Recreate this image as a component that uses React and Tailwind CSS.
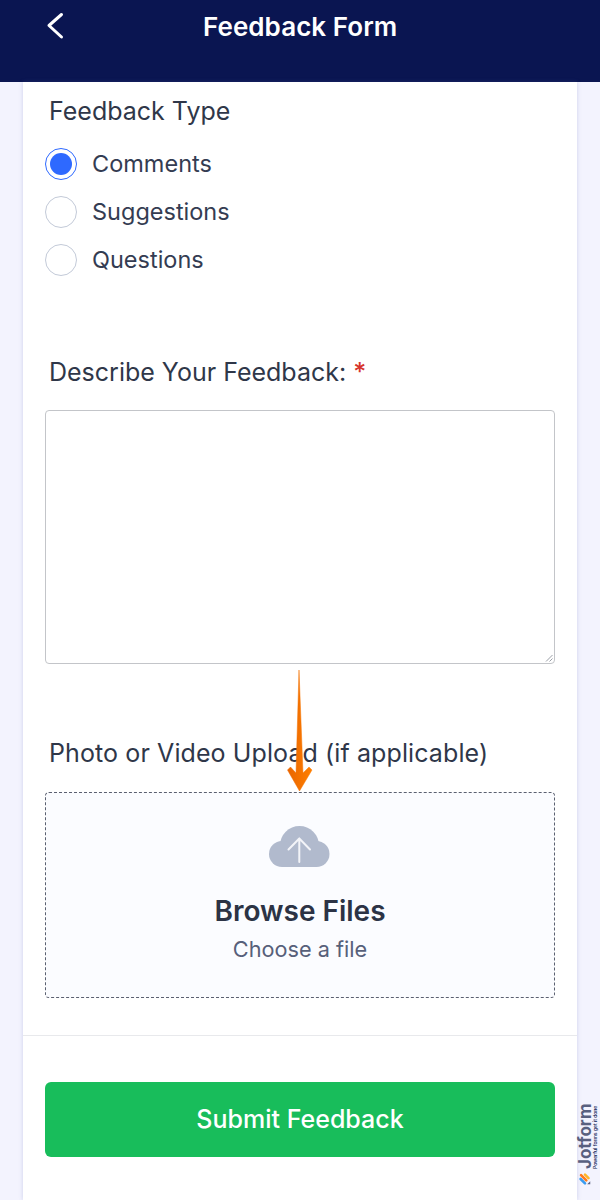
import React from 'react';

function CloudIcon() {
  return (
    <svg width="62" height="42" viewBox="0 0 62 42" className="block">
      <g fill="#b1bacd">
        <circle cx="30.500" cy="19.500" r="19.500" />
        <circle cx="13" cy="28" r="13" />
        <circle cx="47.500" cy="28" r="13" />
        <rect x="13" y="20" width="34.500" height="21" />
      </g>
      <path d="M30.300 36V12.500M19.500 23.500L30.300 12.500L41 23.500" fill="none" stroke="#f3f4f8" strokeWidth="2" strokeLinecap="round" strokeLinejoin="round" />
    </svg>
  );
}

function ArrowOverlay() {
  return (
    <svg width="26" height="122" viewBox="0 0 26 122" className="absolute left-[287px] top-[670px]">
      <defs>
        <linearGradient id="arrowFill" x1="0" y1="0" x2="1" y2="0">
          <stop offset="0" stopColor="#e96500" />
          <stop offset="1" stopColor="#ff7f00" />
        </linearGradient>
      </defs>
      <path d="M12 0L16 103L22 97L25 100L12.500 121L0.500 100L3.500 97L9 103z" fill="url(#arrowFill)" stroke="url(#arrowFill)" strokeWidth="0.500" strokeLinejoin="round" />
    </svg>
  );
}

function JotformBadge() {
  return (
    <div className="absolute left-[538px] top-[1125px] flex h-[22px] w-[100px] origin-center -rotate-90 items-center gap-[3px]">
      <svg width="14" height="16" viewBox="0 0 16 14" className="mb-[6px] shrink-0 rotate-90">
        <path d="M3 7L8 12" stroke="#3a9bf0" strokeWidth="3" strokeLinecap="round" />
        <path d="M3.500 2.500L9.500 8.500" stroke="#ff7a1a" strokeWidth="3" strokeLinecap="round" />
        <path d="M8 2L12 6" stroke="#ffb629" strokeWidth="3" strokeLinecap="round" />
        <path d="M14 9.500V13H10.500z" fill="#59607f" />
      </svg>
      <div className="flex flex-col">
        <div className="text-[17px] leading-[14px] font-bold text-[#59607f]">Jotform</div>
        <div className="text-[5px] leading-[6px] font-medium whitespace-nowrap text-[#0a1551]">Powerful forms get it done</div>
      </div>
    </div>
  );
}

function RadioOption({ label, checked }) {
  return (
    <div className="flex h-[32px] items-center gap-[15px]">
      <span className={`flex h-[32px] w-[32px] items-center justify-center rounded-full border bg-white ${checked ? 'border-[#2e69ff]' : 'border-[#c3cad8]'}`}>
        {checked && <span className="h-[22px] w-[22px] rounded-full bg-[#2e69ff]" />}
      </span>
      <span className="text-[23.500px] leading-none text-[#343c52]">{label}</span>
    </div>
  );
}

export default function App() {
  return (
    <div className="relative h-[1200px] overflow-hidden bg-[#f3f3fe] font-['Inter',sans-serif]">
      <header className="flex h-[82px] bg-[#0a1551] pl-[46px] pr-[203px]">
        <svg width="18" height="28" viewBox="0 0 18 28" className="mt-[12px] shrink-0">
          <path d="M15.500 2.500L3 13.500L15.500 25" fill="none" stroke="white" strokeWidth="3" strokeLinecap="round" strokeLinejoin="round" />
        </svg>
        <h1 className="mt-[11px] ml-[139px] text-[26px] leading-[32px] font-semibold tracking-[0.05px] whitespace-nowrap text-white">Feedback Form</h1>
      </header>

      <main className="mx-[23px] h-[1118px] bg-white shadow-[0_0_4px_rgba(86,105,180,0.25)]">
        <section className="px-[22px] pt-[14px]">
          <h2 className="pl-[4px] text-[25px] leading-[30px] text-[#2f3749]">Feedback Type</h2>
          <div className="mt-[22px] flex flex-col gap-[16px]">
            <RadioOption label="Comments" checked />
            <RadioOption label="Suggestions" />
            <RadioOption label="Questions" />
          </div>
        </section>

        <section className="px-[22px] pt-[81px]">
          <h2 className="pl-[4px] text-[25px] leading-[30px] text-[#2f3749]">
            Describe Your Feedback: <span className="font-medium text-[#d6342c]">*</span>
          </h2>
          <div className="relative mt-[23px] h-[254px] rounded-[4px] border border-[#c3c5c9] bg-white">
            <svg width="8" height="8" viewBox="0 0 8 8" className="absolute right-[1px] bottom-[1px]">
              <path d="M7.500 1L1 7.500M7.500 4.500L4.500 7.500" stroke="#9a9ea6" strokeWidth="1" />
            </svg>
          </div>
        </section>

        <section className="px-[22px] pt-[74px]">
          <h2 className="pl-[4px] text-[25px] leading-[30px] tracking-[0.1px] whitespace-nowrap text-[#2f3749]">Photo or Video Upload (if applicable)</h2>
          <div className="mt-[24px] flex h-[206px] flex-col items-center rounded-[4px] border border-dashed border-[#5b6070] bg-[#fbfcff] pt-[33px]">
            <CloudIcon />
            <div className="mt-[26px] text-[28px] leading-[34px] font-semibold text-[#2c3345]">Browse Files</div>
            <div className="mt-[7px] text-[21.700px] leading-[28px] text-[#57607a]">Choose a file</div>
          </div>
        </section>

        <section className="mt-[37px] border-t border-[#e8e9ec] px-[22px] pt-[46px]">
          <button className="h-[75px] w-full rounded-[6px] bg-[#18bd5b] text-[25px] font-medium text-white">Submit Feedback</button>
        </section>
      </main>

      <ArrowOverlay />
      <JotformBadge />
    </div>
  );
}
